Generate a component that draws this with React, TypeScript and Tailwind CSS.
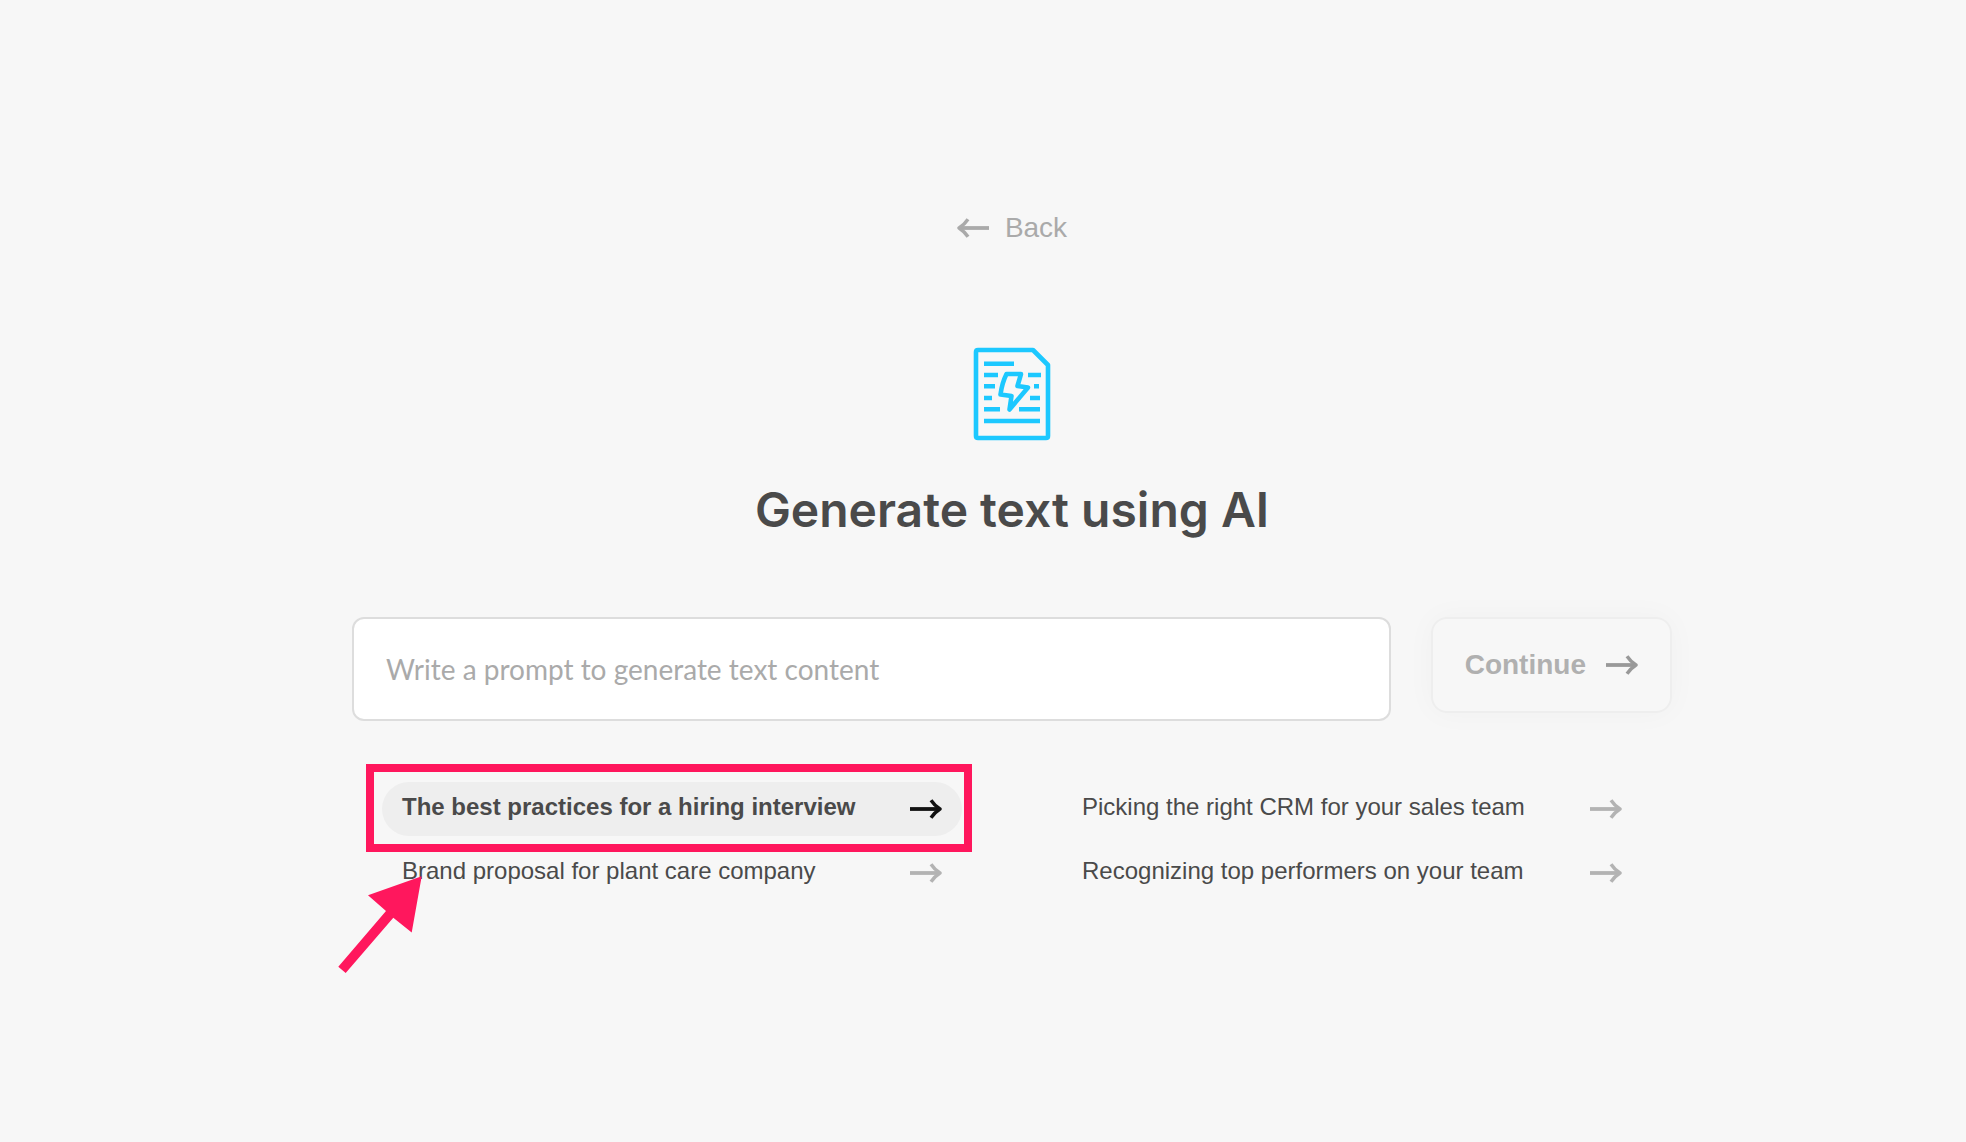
const suggestions = [
  { text: 'The best practices for a hiring interview', active: true },
  { text: 'Picking the right CRM for your sales team', active: false },
  { text: 'Brand proposal for plant care company', active: false },
  { text: 'Recognizing top performers on your team', active: false },
]

function Arrow({ className = '' }: { className?: string }) {
  return (
    <svg viewBox="0 0 32 20" fill="none" stroke="currentColor" strokeWidth="3.8" className={`w-8 h-5 shrink-0 ${className}`} aria-hidden="true">
      <path d="M0 10H30" />
      <path d="M21 1.2Q24.5 6.5 30 10Q24.5 13.5 21 18.8" strokeWidth="3.4" strokeLinejoin="round" />
    </svg>
  )
}

function DocumentIcon() {
  return (
    <svg viewBox="22 16 80 96" fill="none" stroke="#1cc8ff" strokeWidth="4.6" strokeLinejoin="round" className="w-20 h-24" aria-hidden="true">
      <path d="M28 20H83L98 35V106Q98 108 96 108H28Q26 108 26 106V22Q26 20 28 20Z" />
      <path d="M34 33.7H64M34 45H48M78 45H91M34 56.3H45M84 56.3H89M34 68H42M80 68H90M34 79.3H50M69 79.3H90M34 91H90" />
      <path d="M56.5 44H71L67.5 56L78 57.5L59.5 79.5L61.5 66L50.5 64.5Q52 53 56.5 44Z" />
    </svg>
  )
}

function Suggestion({ text, active }: { text: string; active: boolean }) {
  return (
    <div className="relative">
      <button
        type="button"
        className={`flex w-full h-[54px] items-center justify-between rounded-full px-5 text-2xl text-left ${active ? 'bg-[#eeeeee] font-bold' : ''}`}
      >
        <span className="pb-1">{text}</span>
        <Arrow className={active ? 'text-[#111111]' : 'text-[#b3b3b3]'} />
      </button>
      {active && (
        <>
          <div className="pointer-events-none absolute -top-[18px] -bottom-4 -left-4 -right-[10px] border-8 border-[#ff175d]" />
          <svg viewBox="338 874 84 98" fill="#ff175d" className="pointer-events-none absolute z-10 w-[84px] h-[98px] top-[94px] -left-11" aria-hidden="true">
            <path d="M421.7 874.3L411.7 930.5L393.3 915.7L345.7 971L338.3 964.8L386 909L368 893.3Z" />
          </svg>
        </>
      )}
    </div>
  )
}

export default function App() {
  return (
    <main className="min-h-screen bg-[#f7f7f7] pl-[58px] pt-[206px] font-['Liberation_Sans',Arial,sans-serif] text-[#4a4a4a]">
      <div className="mx-auto flex w-full max-w-[1320px] flex-col items-center">
        <a href="#" className="flex h-11 items-center gap-4 text-[28px] text-[#aaaaaa]">
          <Arrow className="rotate-180" />
          <span>Back</span>
        </a>

        <div className="mt-24">
          <DocumentIcon />
        </div>

        <h1 className="mt-8 text-5xl leading-[71px] font-semibold font-['Inter',sans-serif]">Generate text using AI</h1>

        <form className="mt-18 flex w-full items-start gap-10" onSubmit={(e) => e.preventDefault()}>
          <input
            type="text"
            aria-label="Prompt"
            placeholder="Write a prompt to generate text content"
            className="h-[104px] min-w-0 flex-1 rounded-xl border-2 border-[#dddddd] bg-white px-8 font-['Lato',sans-serif] text-[28px] placeholder:text-[#aaaaaa] outline-none"
          />
          <button
            type="submit"
            className="flex h-24 items-center gap-5 rounded-2xl border-2 border-[#eeeeee] px-8 text-[28px] font-bold text-[#b0b0b0] shadow-[0_0_30px_rgba(0,0,0,0.03)]"
          >
            Continue
            <Arrow className="text-[#999999]" />
          </button>
        </form>

        <div className="mt-[61px] grid w-full grid-cols-2 gap-x-[100px] gap-y-[10px] px-[30px]">
          {suggestions.map((item) => (
            <Suggestion key={item.text} text={item.text} active={item.active} />
          ))}
        </div>
      </div>
    </main>
  )
}
